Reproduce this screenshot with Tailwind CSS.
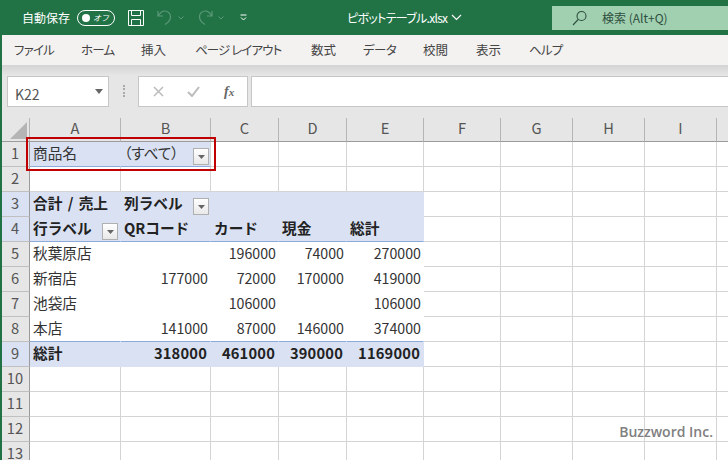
<!DOCTYPE html>
<html lang="ja">
<head>
<meta charset="utf-8">
<script src="https://cdn.jsdelivr.net/npm/@tailwindcss/browser@4"></script>
</head>
<body class="w-[728px] h-[460px] overflow-hidden bg-white font-['Noto_Sans_CJK_JP','Noto_Sans',sans-serif]">
<div class="w-[728px] h-[460px] flex flex-col border-l-2 border-[#217346] overflow-hidden">
  <!-- title bar -->
  <div class="relative -ml-[2px] h-[35px] shrink-0 bg-[#217346] flex items-center text-white text-[12px]">
    <span class="ml-[22px] w-[48px] whitespace-nowrap">自動保存</span>
    <div class="ml-[7px] w-[38px] h-[16px] rounded-full border border-white flex items-center justify-between pl-[4px] pr-[5px]">
      <span class="w-[8px] h-[8px] rounded-full bg-white"></span>
      <span class="text-[8px] leading-none italic">オフ</span>
    </div>
    <svg class="ml-[13px]" width="16" height="16" viewBox="0 0 16 16" fill="none" stroke="#fff" stroke-width="1"><path d="M.5.500h15v15H.5z"/><path d="M3.500.5v5h9v-5M3.500 15.500v-6h9v6"/></svg>
    <svg class="ml-[13px]" width="16" height="17" viewBox="0 0 16 17" fill="none" stroke="#5d9a79" stroke-width="1.2"><path d="M1 2v5h5"/><path d="M1 7c2-3 3.500-5 6.500-5 3.500 0 6 2.500 6 5.500 0 3-2 6-5.500 8"/></svg>
    <svg class="ml-[5px]" width="6" height="4" viewBox="0 0 6 4" fill="none" stroke="#5d9a79"><path d="M.5.5L3 3 5.500.5"/></svg>
    <svg class="ml-[13px]" width="16" height="17" viewBox="0 0 16 17" fill="none" stroke="#5d9a79" stroke-width="1.2"><path d="M15 2v5h-5"/><path d="M15 7c-2-3-3.500-5-6.500-5-3.500 0-6 2.500-6 5.500 0 3 2 6 5.500 8"/></svg>
    <svg class="ml-[5px]" width="6" height="4" viewBox="0 0 6 4" fill="none" stroke="#5d9a79"><path d="M.5.5L3 3 5.500.5"/></svg>
    <svg class="ml-[16px]" width="7" height="7" viewBox="0 0 7 7" fill="none" stroke="#fff"><path d="M.5 1h6M1 3.500l2.500 2.500L6 3.500"/></svg>
    <span class="absolute left-[347px] top-[9px] leading-[18px] whitespace-nowrap tracking-[-0.700px] [font-feature-settings:'palt']">ピボットテーブル.xlsx</span>
    <svg class="absolute left-[451px] top-[14px]" width="11" height="7" viewBox="0 0 11 7" fill="none" stroke="#fff" stroke-width="1.1"><path d="M1 1l4.500 4.500L10 1"/></svg>
    <div class="absolute left-[552px] top-[6px] w-[176px] h-[24px] bg-[#a0d0b0] flex items-center text-[#2f4f3e]">
      <svg class="ml-[20px]" width="16" height="16" viewBox="0 0 16 16" fill="none" stroke="#2f4f3e" stroke-width="1.1"><circle cx="9.500" cy="6" r="4.500"/><path d="M6.200 9.500L1 15"/></svg>
      <span class="ml-[14px] whitespace-nowrap">検索 (Alt+Q)</span>
    </div>
  </div>
  <!-- ribbon tabs -->
  <div class="h-[30px] shrink-0 bg-[#f3f2f1] -ml-px pl-[13px] pt-[1px] flex items-center text-[12.500px] text-[#444] whitespace-nowrap [font-feature-settings:'palt']">
    <span class="w-[67px] tracking-[-0.800px]">ファイル</span>
    <span class="w-[60px] tracking-[-0.800px]">ホーム</span>
    <span class="w-[54px]">挿入</span>
    <span class="w-[116px] tracking-[-0.900px]">ページ レイアウト</span>
    <span class="w-[52px]">数式</span>
    <span class="w-[60px] tracking-[-0.600px]">データ</span>
    <span class="w-[53px]">校閲</span>
    <span class="w-[53px]">表示</span>
    <span class="tracking-[-0.800px]">ヘルプ</span>
  </div>
  <!-- formula bar -->
  <div class="h-[53px] shrink-0 bg-gradient-to-b from-[#d4d4d4] from-0% via-[#e6e6e6] via-20% to-[#e6e6e6] flex items-start pt-[11px] pl-[4px]">
    <div class="ml-[1px] w-[102px] h-[31px] bg-white border border-[#c6c6c6] flex items-center justify-between pl-[7px] pr-[5px] text-[14px] text-[#555]">
      <span class="pt-[5px]">K22</span>
      <svg width="8" height="5" viewBox="0 0 8 5" fill="#666"><path d="M0 0h8L4 5z"/></svg>
    </div>
    <div class="w-[4px] h-[12px] mt-[9px] ml-[14px] border-l-2 border-dotted border-[#aaa]"></div>
    <div class="ml-[11px] w-[110px] h-[31px] bg-white border border-[#c6c6c6] flex items-center">
      <svg class="ml-[14px]" width="11" height="11" viewBox="0 0 11 11" fill="none" stroke="#bbb" stroke-width="1.500"><path d="M1 1l9 9M10 1l-9 9"/></svg>
      <svg class="ml-[23px]" width="13" height="11" viewBox="0 0 13 11" fill="none" stroke="#bbb" stroke-width="2"><path d="M1 6l4 4 7-9"/></svg>
      <span class="ml-[24px] font-['Liberation_Serif',serif] italic font-bold text-[14px] text-[#666]">f<span class="text-[11px]">x</span></span>
    </div>
    <div class="ml-[3px] flex-1 h-[31px] bg-white border-y border-l border-[#c6c6c6]"></div>
  </div>
  <!-- sheet -->
  <div class="relative flex-1 overflow-hidden -ml-px">
    <table class="table-fixed w-[760px] border-separate border-spacing-0 text-[14.670px] text-[#333] [&_td]:border-r [&_td]:border-b [&_td]:border-[#d4d4d4] [&_td]:p-0 [&_td]:px-[3px] [&_td]:pb-[2px] [&_td]:leading-[22px] [&_td]:whitespace-nowrap [&_td]:overflow-hidden [&_tr]:h-[25px] [&_td:first-child]:bg-[#e6e6e6] [&_td:first-child]:text-center [&_td:first-child]:border-r-[#9b9b9b] [&_td:first-child]:border-b-[#c0c0c0] [&_td:first-child]:text-[#555] [&_td:first-child]:!px-0">
      <colgroup>
        <col class="w-[29px]"><col class="w-[91px]"><col class="w-[90px]"><col class="w-[68px]"><col class="w-[68px]"><col class="w-[77px]"><col class="w-[77px]"><col class="w-[72px]"><col class="w-[72px]"><col class="w-[72px]"><col class="w-[44px]">
      </colgroup>
      <tbody>
        <tr class="!h-[24px] [&_td]:!leading-[20px] [&_td]:!pb-[3px] [&_td]:!bg-[#e6e6e6] [&_td]:text-center [&_td]:!border-b-[#9b9b9b] [&_td]:!border-r-[#b5b5b5] [&_td]:text-[#555]">
          <td class="relative"><svg class="absolute right-[2px] bottom-[2px]" width="17" height="17" viewBox="0 0 17 17" fill="#b5b5b5"><path d="M17 0v17H0z"/></svg></td><td>A</td><td>B</td><td>C</td><td>D</td><td>E</td><td>F</td><td>G</td><td>H</td><td>I</td><td>J</td>
        </tr>
        <tr>
          <td>1</td>
          <td class="!bg-[#d9e1f2] !border-r-[#d9e1f2] !border-b-[#8ea9db]">商品名</td>
          <td class="relative !bg-[#d9e1f2] !border-b-[#8ea9db] [font-feature-settings:'palt']">（すべて）
            <span class="absolute right-[1px] bottom-[1px] w-[16px] h-[17px] bg-gradient-to-b from-[#ffffff] to-[#e8e8e8] border border-[#b0b0b0] flex items-center justify-center"><svg width="7" height="4" viewBox="0 0 7 4" fill="#666"><path d="M0 0h7L3.500 4z"/></svg></span>
          </td>
          <td></td><td></td><td></td><td></td><td></td><td></td><td></td><td></td>
        </tr>
        <tr><td>2</td><td></td><td></td><td></td><td></td><td></td><td></td><td></td><td></td><td></td><td></td></tr>
        <tr class="font-bold text-[#222] [&_td:nth-child(-n+6)]:bg-[#d9e1f2] [&_td:nth-child(n+2):nth-child(-n+6)]:border-[#d9e1f2]">
          <td class="font-normal">3</td>
          <td class="[word-spacing:2px]">合計 / 売上</td>
          <td class="relative">列ラベル
            <span class="absolute right-[1px] bottom-[1px] w-[16px] h-[17px] bg-gradient-to-b from-[#ffffff] to-[#e8e8e8] border border-[#b0b0b0] flex items-center justify-center"><svg width="7" height="4" viewBox="0 0 7 4" fill="#666"><path d="M0 0h7L3.500 4z"/></svg></span>
          </td>
          <td></td><td></td><td></td><td></td><td></td><td></td><td></td><td></td>
        </tr>
        <tr class="font-bold text-[#222] [&_td:nth-child(-n+6)]:bg-[#d9e1f2] [&_td:nth-child(n+2):nth-child(-n+6)]:border-r-[#d9e1f2] [&_td:nth-child(n+2):nth-child(-n+6)]:border-b-[#8ea9db]">
          <td class="font-normal">4</td>
          <td class="relative">行ラベル
            <span class="absolute right-[2px] bottom-[1px] w-[16px] h-[17px] bg-gradient-to-b from-[#ffffff] to-[#e8e8e8] border border-[#b0b0b0] flex items-center justify-center"><svg width="7" height="4" viewBox="0 0 7 4" fill="#666"><path d="M0 0h7L3.500 4z"/></svg></span>
          </td>
          <td>QRコード</td><td>カード</td><td>現金</td><td>総計</td><td></td><td></td><td></td><td></td><td></td>
        </tr>
        <tr class="[&_td:nth-child(n+3):nth-child(-n+6)]:text-right [&_td:nth-child(n+3):nth-child(-n+6)]:text-[14.200px] [&_td:nth-child(n+2):nth-child(-n+6)]:border-r-transparent [&_td:nth-child(n+2):nth-child(-n+6)]:border-b-transparent [&_td:nth-child(n+3)]:!pr-[2px]">
          <td>5</td><td>秋葉原店</td><td></td><td>196000</td><td>74000</td><td>270000</td><td></td><td></td><td></td><td></td><td></td>
        </tr>
        <tr class="[&_td:nth-child(n+3):nth-child(-n+6)]:text-right [&_td:nth-child(n+3):nth-child(-n+6)]:text-[14.200px] [&_td:nth-child(n+2):nth-child(-n+6)]:border-r-transparent [&_td:nth-child(n+2):nth-child(-n+6)]:border-b-transparent [&_td:nth-child(n+3)]:!pr-[2px]">
          <td>6</td><td>新宿店</td><td>177000</td><td>72000</td><td>170000</td><td>419000</td><td></td><td></td><td></td><td></td><td></td>
        </tr>
        <tr class="[&_td:nth-child(n+3):nth-child(-n+6)]:text-right [&_td:nth-child(n+3):nth-child(-n+6)]:text-[14.200px] [&_td:nth-child(n+2):nth-child(-n+6)]:border-r-transparent [&_td:nth-child(n+2):nth-child(-n+6)]:border-b-transparent [&_td:nth-child(n+3)]:!pr-[2px]">
          <td>7</td><td>池袋店</td><td></td><td>106000</td><td></td><td>106000</td><td></td><td></td><td></td><td></td><td></td>
        </tr>
        <tr class="[&_td:nth-child(n+3):nth-child(-n+6)]:text-right [&_td:nth-child(n+3):nth-child(-n+6)]:text-[14.200px] [&_td:nth-child(n+2):nth-child(-n+6)]:border-r-transparent [&_td:nth-child(n+2):nth-child(-n+6)]:border-b-[#8ea9db] [&_td:nth-child(n+3)]:!pr-[2px]">
          <td>8</td><td>本店</td><td>141000</td><td>87000</td><td>146000</td><td>374000</td><td></td><td></td><td></td><td></td><td></td>
        </tr>
        <tr class="font-bold text-[#222] [&_td:nth-child(-n+6)]:bg-[#d9e1f2] [&_td:nth-child(n+2):nth-child(-n+6)]:border-[#d9e1f2] [&_td:nth-child(n+3):nth-child(-n+6)]:text-right [&_td:nth-child(n+3):nth-child(-n+6)]:tracking-[0.200px] [&_td:nth-child(n+3)]:!pr-[3px]">
          <td class="font-normal">9</td><td>総計</td><td>318000</td><td>461000</td><td>390000</td><td>1169000</td><td></td><td></td><td></td><td></td><td></td>
        </tr>
        <tr><td>10</td><td></td><td></td><td></td><td></td><td></td><td></td><td></td><td></td><td></td><td></td></tr>
        <tr><td>11</td><td></td><td></td><td></td><td></td><td></td><td></td><td></td><td></td><td></td><td></td></tr>
        <tr><td>12</td><td></td><td></td><td></td><td></td><td></td><td></td><td></td><td></td><td></td><td></td></tr>
        <tr><td>13</td><td></td><td></td><td></td><td></td><td></td><td></td><td></td><td></td><td></td><td></td></tr>
      </tbody>
    </table>
    <div class="absolute left-[25px] top-[19px] w-[190px] h-[34px] border-2 border-[#c00000] pointer-events-none"></div>
    <span class="absolute right-[15px] top-[304px] text-[14px] leading-[20px] font-semibold text-[#808080] font-['Open_Sans',sans-serif]">Buzzword Inc.</span>
  </div>
</div>
</body>
</html>
